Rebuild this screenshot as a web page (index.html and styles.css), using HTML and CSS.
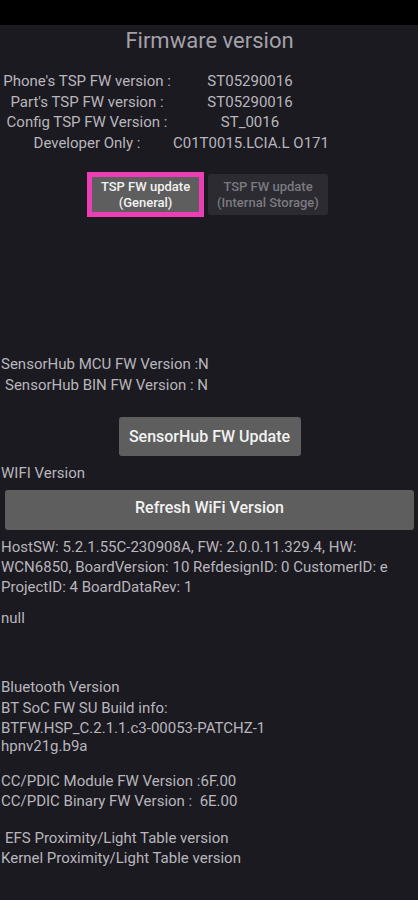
FILE: index.html
```html
<!DOCTYPE html>
<html lang="en">
<head>
    <meta charset="UTF-8">
    <meta name="viewport" content="width=device-width, initial-scale=1.0">
    <title>Firmware version</title>
    <link rel="stylesheet" href="styles.css">
</head>
<body>
    <div class="status-bar"></div>

    <div class="screen">
        <h1 class="title">Firmware version</h1>

        <div class="tsp-table">
            <div class="tsp-label">Phone's TSP FW version :</div>
            <div class="tsp-value">ST05290016</div>
            <div class="tsp-label">Part's TSP FW version :</div>
            <div class="tsp-value">ST05290016</div>
            <div class="tsp-label">Config TSP FW Version :</div>
            <div class="tsp-value">ST_0016</div>
            <div class="tsp-label">Developer Only :</div>
            <div class="tsp-value">C01T0015.LCIA.L O171</div>
        </div>

        <div class="tsp-buttons">
            <div class="focus-ring">
                <button class="btn btn-tsp">TSP FW update<br>(General)</button>
            </div>
            <button class="btn btn-tsp disabled">TSP FW update<br>(Internal Storage)</button>
        </div>

        <div class="sensorhub">
            <div class="line">SensorHub MCU FW Version :N</div>
            <div class="line shift">SensorHub BIN FW Version : N</div>
        </div>

        <button class="btn btn-sensorhub">SensorHub FW Update</button>

        <div class="line wifi-label">WIFI Version</div>
        <button class="btn btn-wide">Refresh WiFi Version</button>

        <div class="wifi-info">HostSW: 5.2.1.55C-230908A, FW: 2.0.0.11.329.4, HW:<br>WCN6850, BoardVersion: 10 RefdesignID: 0 CustomerID: e<br>ProjectID: 4 BoardDataRev: 1</div>

        <div class="line null-text">null</div>

        <div class="line bt-label">Bluetooth Version</div>
        <div class="bt-info">BT SoC FW SU Build info:<br>BTFW.HSP_C.2.1.1.c3-00053-PATCHZ-1</div>
        <div class="bt-nv">hpnv21g.b9a</div>

        <div class="pdic">
            <div class="line">CC/PDIC Module FW Version :6F.00</div>
            <div class="line">CC/PDIC Binary FW Version :&nbsp; 6E.00</div>
        </div>

        <div class="prox">
            <div class="line shift">EFS Proximity/Light Table version</div>
            <div class="line">Kernel Proximity/Light Table version</div>
        </div>
    </div>
</body>
</html>
```

FILE: styles.css
```css
body {
    margin: 0;
    background-color: #1c1a21;
    color: #b8b6bc;
    font-family: Roboto, 'Liberation Sans', sans-serif;
    font-size: 15px;
}

.status-bar {
    height: 25px;
    background-color: #000;
}

.screen {
    padding: 0 0 0 1px;
}

.title {
    margin: 1px 0 0;
    font-size: 22px;
    font-weight: normal;
    line-height: 30px;
    text-align: center;
    color: #a3a1a8;
}

.tsp-table {
    display: grid;
    grid-template-columns: 172px 154px;
    margin-top: 15px;
    line-height: 20.5px;
    text-align: center;
    white-space: nowrap;
}

.tsp-buttons {
    display: flex;
    align-items: center;
    gap: 4px;
    margin: 19px 0 0 86px;
}

.btn {
    border: none;
    border-radius: 3px;
    background-color: #5e5e5e;
    color: #f2f2f2;
    font-family: Roboto, 'Liberation Sans', sans-serif;
    font-weight: 500;
    cursor: pointer;
}

.btn-tsp {
    display: block;
    padding: 0;
    font-size: 13px;
    line-height: 16px;
    height: 41px;
    width: 120px;
}

.focus-ring {
    width: 107px;
    height: 35px;
    border: 5px solid #ed3fb5;
    overflow: hidden;
    display: flex;
    align-items: center;
    justify-content: center;
    background-color: #5e5e5e;
}

.focus-ring .btn-tsp {
    flex-shrink: 0;
    border-radius: 0;
}

.btn-tsp.disabled {
    background-color: #2c2b31;
    color: #7b7a80;
}

.line {
    line-height: 20.5px;
}

.shift {
    padding-left: 4px;
}

.sensorhub {
    margin-top: 137px;
}

.btn-sensorhub {
    display: block;
    margin: 22px auto 0;
    width: 182px;
    height: 39px;
    font-size: 16px;
}

.wifi-label {
    margin-top: 7px;
}

.btn-wide {
    display: block;
    width: 409px;
    height: 40px;
    margin: 6px 0 0 4px;
    padding-bottom: 6px;
    font-size: 16px;
}

.wifi-info {
    margin-top: 7px;
    line-height: 20px;
    white-space: nowrap;
}

.null-text {
    margin-top: 11px;
}

.bt-label {
    margin-top: 49px;
}

.bt-info {
    line-height: 20px;
}

.bt-nv {
    line-height: 16px;
}

.pdic {
    margin-top: 17px;
}

.prox {
    margin-top: 16px;
}
```
